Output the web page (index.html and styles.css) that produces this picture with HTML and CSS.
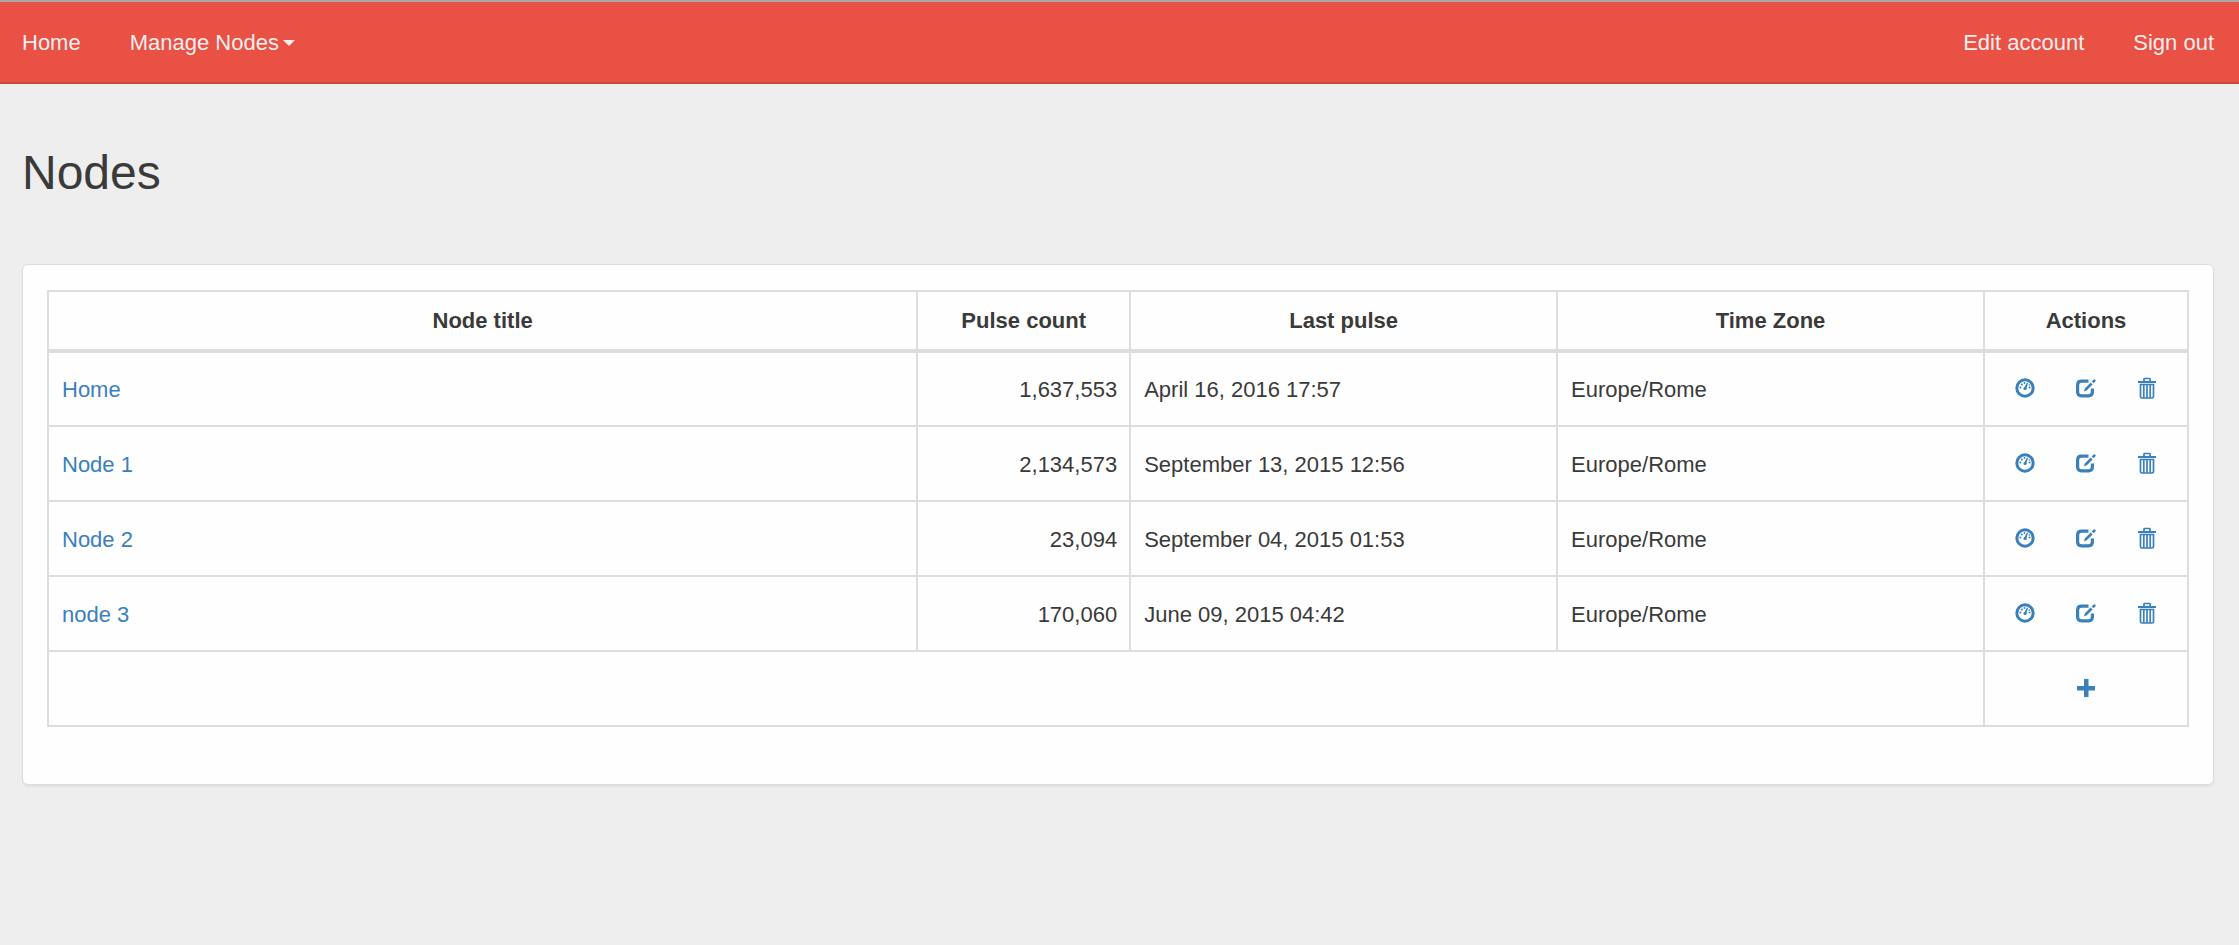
FILE: index.html
```html
<!DOCTYPE html>
<html lang="en">
<head>
<meta charset="utf-8">
<title>Nodes</title>
<link rel="stylesheet" href="styles.css">
</head>
<body>
<svg class="sprite" aria-hidden="true">
  <symbol id="gauge" viewBox="0 0 20 20">
    <circle cx="10" cy="10" r="8.2" fill="none" stroke="currentColor" stroke-width="3"/>
    <path d="M9 10 L12 4.600 L13 5 L11.300 10.800 Z" fill="currentColor"/>
    <circle cx="10.100" cy="10.500" r="1.600" fill="currentColor"/>
    <g fill="currentColor"><circle cx="5.400" cy="9.500" r="1"/><circle cx="6.900" cy="6.600" r="1"/><circle cx="9.500" cy="5" r=".9"/><circle cx="14.300" cy="7" r=".8"/><circle cx="14.600" cy="9.500" r="1"/></g>
  </symbol>
  <symbol id="edit" viewBox="0 0 20 20">
    <path d="M12.500 3.200H5.500Q1.600 3.200 1.600 7V14Q1.600 17.800 5.500 17.800H12.500Q16.400 17.800 16.400 14V10.500" fill="none" stroke="currentColor" stroke-width="3.200"/>
    <path d="M7.800 13.500 9 10.300 14.700 4.400 16.600 6.400 10.800 12.200ZM15.700 3.400 17.600 1.500Q18.400.8 19.300 1.700 20.200 2.500 19.500 3.300L17.600 5.200Z" fill="currentColor"/>
  </symbol>
  <symbol id="trash" viewBox="0 0 20 22">
    <path d="M1 5H19" stroke="currentColor" stroke-width="2"/>
    <path d="M7 4.500V2Q7 1.500 7.500 1.500H12.500Q13 1.500 13 2V4.500M3.500 7.500H16.500V19.500Q16.500 21 15 21H5Q3.500 21 3.500 19.500ZM6.800 7.500V21M10 7.500V21M13.200 7.500V21" fill="none" stroke="currentColor" stroke-width="1.700"/>
  </symbol>
  <symbol id="plus" viewBox="0 0 20 20">
    <path d="M8 1h4.500v7H19v4.500h-6.500V19H8v-6.500H1V8h7z" fill="currentColor"/>
  </symbol>
</svg>
<nav class="navbar">
  <div class="nav-group">
    <a href="#">Home</a>
    <button type="button" class="dropdown" aria-haspopup="true">Manage Nodes<span class="caret"></span></button>
  </div>
  <div class="nav-group">
    <a href="#">Edit account</a>
    <a href="#">Sign out</a>
  </div>
</nav>
<main class="page">
  <h1>Nodes</h1>
  <section class="panel">
    <table class="nodes">
      <colgroup><col><col class="col-count"><col class="col-wide"><col class="col-wide"><col class="col-actions"></colgroup>
      <thead>
        <tr><th>Node title</th><th>Pulse count</th><th>Last pulse</th><th>Time Zone</th><th>Actions</th></tr>
      </thead>
      <tbody>
        <tr>
          <td><a href="#">Home</a></td><td class="count">1,637,553</td><td>April 16, 2016 17:57</td><td>Europe/Rome</td>
          <td class="action-cell"><div class="actions"><a href="#" aria-label="Dashboard"><svg class="icon"><use href="#gauge"/></svg></a><a href="#" aria-label="Edit"><svg class="icon"><use href="#edit"/></svg></a><a href="#" aria-label="Delete"><svg class="icon tall"><use href="#trash"/></svg></a></div></td>
        </tr>
        <tr>
          <td><a href="#">Node 1</a></td><td class="count">2,134,573</td><td>September 13, 2015 12:56</td><td>Europe/Rome</td>
          <td class="action-cell"><div class="actions"><a href="#" aria-label="Dashboard"><svg class="icon"><use href="#gauge"/></svg></a><a href="#" aria-label="Edit"><svg class="icon"><use href="#edit"/></svg></a><a href="#" aria-label="Delete"><svg class="icon tall"><use href="#trash"/></svg></a></div></td>
        </tr>
        <tr>
          <td><a href="#">Node 2</a></td><td class="count">23,094</td><td>September 04, 2015 01:53</td><td>Europe/Rome</td>
          <td class="action-cell"><div class="actions"><a href="#" aria-label="Dashboard"><svg class="icon"><use href="#gauge"/></svg></a><a href="#" aria-label="Edit"><svg class="icon"><use href="#edit"/></svg></a><a href="#" aria-label="Delete"><svg class="icon tall"><use href="#trash"/></svg></a></div></td>
        </tr>
        <tr>
          <td><a href="#">node 3</a></td><td class="count">170,060</td><td>June 09, 2015 04:42</td><td>Europe/Rome</td>
          <td class="action-cell"><div class="actions"><a href="#" aria-label="Dashboard"><svg class="icon"><use href="#gauge"/></svg></a><a href="#" aria-label="Edit"><svg class="icon"><use href="#edit"/></svg></a><a href="#" aria-label="Delete"><svg class="icon tall"><use href="#trash"/></svg></a></div></td>
        </tr>
        <tr>
          <td colspan="4"></td>
          <td class="action-cell"><div class="actions"><a href="#" aria-label="Add node"><svg class="icon"><use href="#plus"/></svg></a></div></td>
        </tr>
      </tbody>
    </table>
  </section>
</main>
</body>
</html>
```

FILE: styles.css
```css
* { box-sizing: border-box; }

body {
  margin: 0;
  background: #eeeeee;
  color: #3a3a3a;
  font: 22px/32px "Liberation Sans", Arial, sans-serif;
}

.sprite { position: absolute; width: 0; height: 0; }

.navbar {
  display: flex;
  justify-content: space-between;
  align-items: center;
  padding: 25px 25px 23px 22px;
  background: #e95144;
  border-top: 2px solid #aaaaaa;
  border-bottom: 2px solid #c9483c;
}

.nav-group { display: flex; align-items: center; gap: 49px; }

.navbar a,
.dropdown {
  color: #f0eeee;
  font: inherit;
  text-decoration: none;
}

.dropdown {
  display: flex;
  align-items: center;
  gap: 4px;
  padding: 0;
  border: 0;
  background: none;
}

.caret {
  border: 6px solid transparent;
  border-top-color: currentColor;
  border-bottom: 0;
}

.page { padding: 60px 25px 60px 22px; }

h1 {
  margin: 0 0 63px;
  font-size: 48px;
  font-weight: 400;
  line-height: 57px;
}

.panel {
  padding: 25px 24px 57px;
  background: #fefefe;
  border: 1px solid #dcdcdc;
  border-radius: 6px;
  box-shadow: 0 2px 2px rgba(0, 0, 0, 0.05);
}

.nodes {
  width: 100%;
  table-layout: fixed;
  border-collapse: collapse;
}

.col-count { width: 9.95%; }
.col-wide { width: 19.95%; }
.col-actions { width: 204px; }

th,
td {
  padding: 13px 12px;
  border: 2px solid #dddddd;
  text-align: left;
}

th {
  padding-bottom: 12px;
  border-bottom-width: 4px;
  text-align: center;
}

tbody td { height: 75px; padding: 14px 12px 12px 13px; }
tbody .action-cell { padding: 12px 13px 14px; }
td.count { text-align: right; }

td a { color: #3a80bd; text-decoration: none; }

.actions { display: flex; justify-content: center; gap: 41px; }
.actions a { display: flex; align-items: center; }

.icon { display: block; width: 20px; height: 20px; }
.tall { height: 22px; }
```
